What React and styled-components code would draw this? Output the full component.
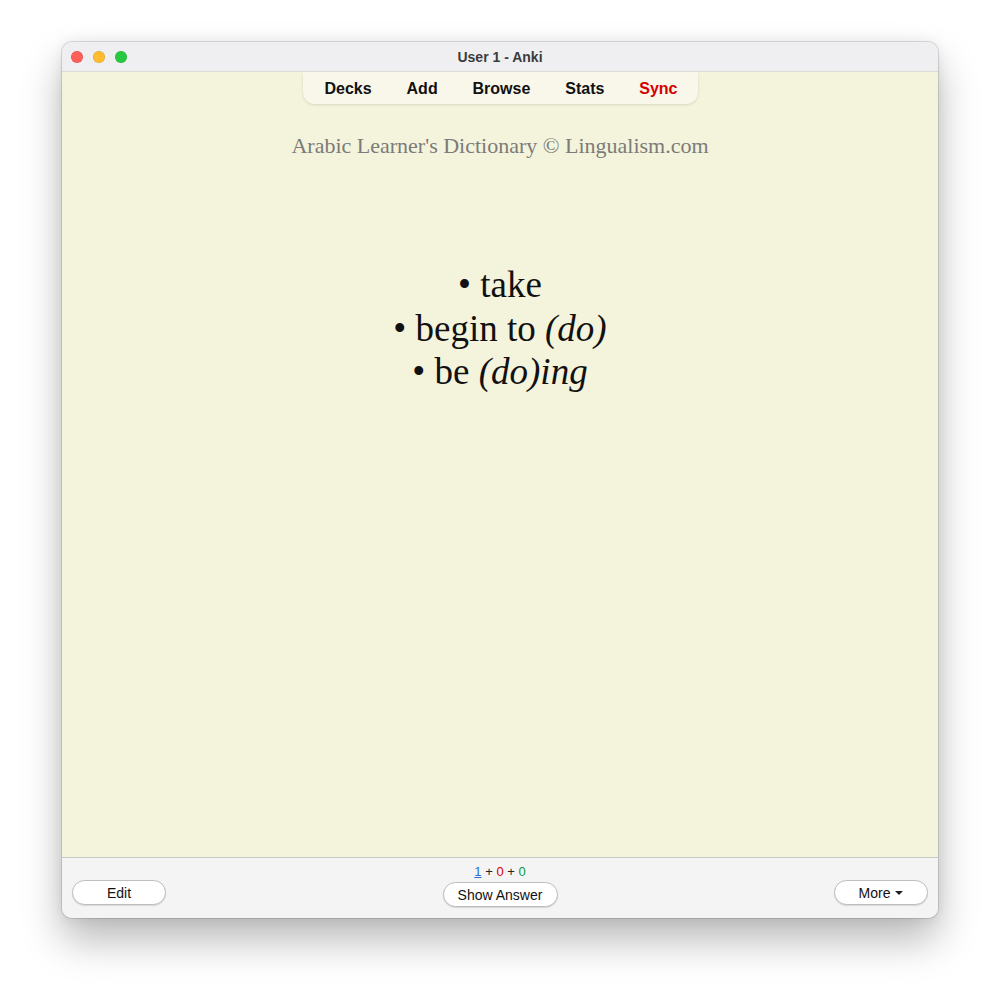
import styled, { createGlobalStyle } from 'styled-components';

const GlobalStyle = createGlobalStyle`
  html, body {
    margin: 0;
    padding: 0;
    background: #ffffff;
  }
  body {
    font-family: "Liberation Sans", Arial, sans-serif;
  }
`;

const Page = styled.div`
  width: 1000px;
  height: 1000px;
  padding: 42px 62px 0;
  box-sizing: border-box;
`;

const Window = styled.div`
  width: 876px;
  height: 876px;
  display: flex;
  flex-direction: column;
  border-radius: 10px;
  overflow: hidden;
  background: #f4f3dc;
  box-shadow: 0 0 0 1px rgba(0, 0, 0, 0.12), 0 22px 40px rgba(0, 0, 0, 0.28),
    0 0 14px rgba(0, 0, 0, 0.08);
`;

const TitleBar = styled.div`
  height: 30px;
  flex: none;
  position: relative;
  display: flex;
  align-items: center;
  justify-content: center;
  background: #efeff2;
  border-bottom: 1px solid #dcdcd6;
  box-sizing: border-box;
`;

const Lights = styled.div`
  position: absolute;
  left: 9px;
  top: 9px;
  display: flex;
  gap: 10px;
`;

const Light = styled.span`
  width: 12px;
  height: 12px;
  border-radius: 50%;
  background: ${(p) => p.color};
  box-shadow: inset 0 0 0 0.5px rgba(0, 0, 0, 0.15);
`;

const Title = styled.div`
  font-size: 14px;
  font-weight: bold;
  color: #3b3b3b;
`;

const Content = styled.div`
  flex: 1;
  display: flex;
  flex-direction: column;
  align-items: center;
`;

const Toolbar = styled.nav`
  width: 395px;
  height: 32px;
  box-sizing: border-box;
  display: flex;
  align-items: center;
  justify-content: space-between;
  padding: 2px 20px 0 22px;
  background: #f8f7ea;
  border-radius: 0 0 12px 12px;
  box-shadow: 0 1px 3px rgba(0, 0, 0, 0.12);
`;

const ToolLink = styled.span`
  font-size: 16px;
  font-weight: bold;
  color: ${(p) => (p.$alert ? '#d40000' : '#111111')};
`;

const Attribution = styled.div`
  margin-top: 29px;
  font-family: "Liberation Serif", "Times New Roman", serif;
  font-size: 22px;
  color: #7b7b78;
`;

const Card = styled.div`
  margin-top: 104px;
  font-family: "Liberation Serif", "Times New Roman", serif;
  font-size: 37px;
  line-height: 43.5px;
  color: #111111;
  text-align: center;
`;

const BottomBar = styled.div`
  height: 61px;
  flex: none;
  box-sizing: border-box;
  border-top: 1px solid #c9c9c4;
  background: #f4f4f4;
  display: grid;
  grid-template-columns: 1fr auto 1fr;
  align-items: start;
  padding: 0 10px;
`;

const Center = styled.div`
  display: flex;
  flex-direction: column;
  align-items: center;
  padding-top: 6px;
`;

const Counts = styled.div`
  font-size: 13px;
  line-height: 15px;
  color: #222;
  margin-bottom: 3px;
`;

const Count = styled.span`
  color: ${(p) => p.color};
  text-decoration: ${(p) => (p.$underline ? 'underline' : 'none')};
`;

const Button = styled.button`
  width: ${(p) => p.$w}px;
  height: 25px;
  margin-top: ${(p) => p.$top || 0}px;
  justify-self: ${(p) => p.$align || 'center'};
  border: 1px solid #bdbdbd;
  border-radius: 13px;
  background: #ffffff;
  box-shadow: 0 1px 1px rgba(0, 0, 0, 0.12);
  font-family: "Liberation Sans", Arial, sans-serif;
  font-size: 14px;
  color: #111;
  display: flex;
  align-items: center;
  justify-content: center;
  gap: 5px;
  padding: 0;
`;

const Caret = styled.span`
  width: 0;
  height: 0;
  border-left: 4px solid transparent;
  border-right: 4px solid transparent;
  border-top: 4px solid #222;
  margin-top: 1px;
`;

export default function App() {
  return (
    <>
      <GlobalStyle />
      <Page>
        <Window>
          <TitleBar>
            <Lights>
              <Light color="#fe5f57" />
              <Light color="#febc2e" />
              <Light color="#28c840" />
            </Lights>
            <Title>User 1 - Anki</Title>
          </TitleBar>
          <Content>
            <Toolbar>
              <ToolLink>Decks</ToolLink>
              <ToolLink>Add</ToolLink>
              <ToolLink>Browse</ToolLink>
              <ToolLink>Stats</ToolLink>
              <ToolLink $alert>Sync</ToolLink>
            </Toolbar>
            <Attribution>Arabic Learner's Dictionary © Lingualism.com</Attribution>
            <Card>
              • take
              <br />
              • begin to <i>(do)</i>
              <br />
              • be <i>(do)ing</i>
            </Card>
          </Content>
          <BottomBar>
            <Button $w={94} $top={22} $align="start">
              Edit
            </Button>
            <Center>
              <Counts>
                <Count color="#2a6fd6" $underline>1</Count> +{' '}
                <Count color="#d40000">0</Count> +{' '}
                <Count color="#0a9a3a">0</Count>
              </Counts>
              <Button $w={115}>Show Answer</Button>
            </Center>
            <Button $w={94} $top={22} $align="end">
              More <Caret />
            </Button>
          </BottomBar>
        </Window>
      </Page>
    </>
  );
}
